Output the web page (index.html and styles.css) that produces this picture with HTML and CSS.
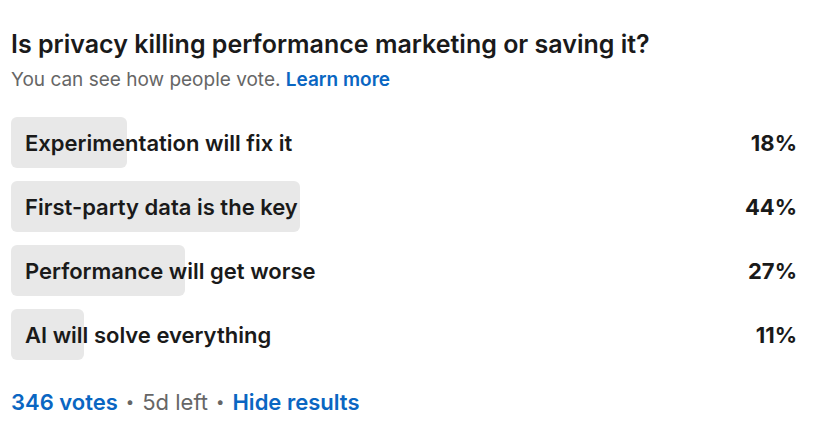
FILE: index.html
```html
<!DOCTYPE html>
<html>
<head>
  <meta charset="UTF-8">
  <title>Poll</title>
  <link rel="stylesheet" href="styles.css">
</head>
<body>
  <div class="poll">
    <h2 class="question">Is privacy killing performance marketing or saving it?</h2>
    <p class="note">You can see how people vote. <a href="#">Learn more</a></p>

    <ul class="options">
      <li class="option">
        <div class="track">
          <div class="bar" style="width: 17.9%"></div>
          <span class="label">Experimentation will fix it</span>
        </div>
        <span class="pct">18%</span>
      </li>
      <li class="option">
        <div class="track">
          <div class="bar" style="width: 44.4%"></div>
          <span class="label">First-party data is the key</span>
        </div>
        <span class="pct">44%</span>
      </li>
      <li class="option">
        <div class="track">
          <div class="bar" style="width: 26.8%"></div>
          <span class="label">Performance will get worse</span>
        </div>
        <span class="pct">27%</span>
      </li>
      <li class="option">
        <div class="track">
          <div class="bar" style="width: 11.2%"></div>
          <span class="label">AI will solve everything</span>
        </div>
        <span class="pct">11%</span>
      </li>
    </ul>

    <div class="meta">
      <a href="#">346 votes</a>
      <span class="dot">•</span>
      <span>5d left</span>
      <span class="dot">•</span>
      <a href="#">Hide results</a>
    </div>
  </div>
</body>
</html>
```

FILE: styles.css
```css
body {
  margin: 0;
  font-family: Inter, "Noto Sans", sans-serif;
  background-color: #fff;
  color: #1d1d1d;
}
.poll {
  padding: 27px 23px 0 11px;
}
.question {
  margin: 0;
  font-size: 25px;
  font-weight: 600;
  line-height: 34px;
  color: #1a1a1a;
}
.note {
  margin: 6px 0 0;
  font-size: 19px;
  line-height: 26px;
  color: #666;
}
.note a {
  color: #0a66c2;
  font-weight: 600;
  text-decoration: none;
}
.options {
  list-style: none;
  margin: 24px 0 0;
  padding: 0;
  display: flex;
  flex-direction: column;
  gap: 13px;
}
.option {
  display: flex;
  align-items: center;
}
.track {
  position: relative;
  width: 650px;
  height: 51px;
  display: flex;
  align-items: center;
}
.bar {
  position: absolute;
  left: 0;
  top: 0;
  bottom: 0;
  background-color: #e8e8e8;
  border-radius: 6px;
}
.label {
  position: relative;
  padding-left: 14px;
  font-size: 22px;
  font-weight: 600;
  color: #1a1a1a;
}
.pct {
  flex: 1;
  text-align: right;
  font-size: 22px;
  font-weight: 700;
  color: #1a1a1a;
}
.meta {
  margin-top: 27px;
  font-size: 22px;
  line-height: 30px;
  color: #666;
  display: flex;
  align-items: center;
  gap: 8px;
}
.meta a {
  color: #0a66c2;
  font-weight: 600;
  text-decoration: none;
}
.dot {
  font-size: 15px;
}
```
